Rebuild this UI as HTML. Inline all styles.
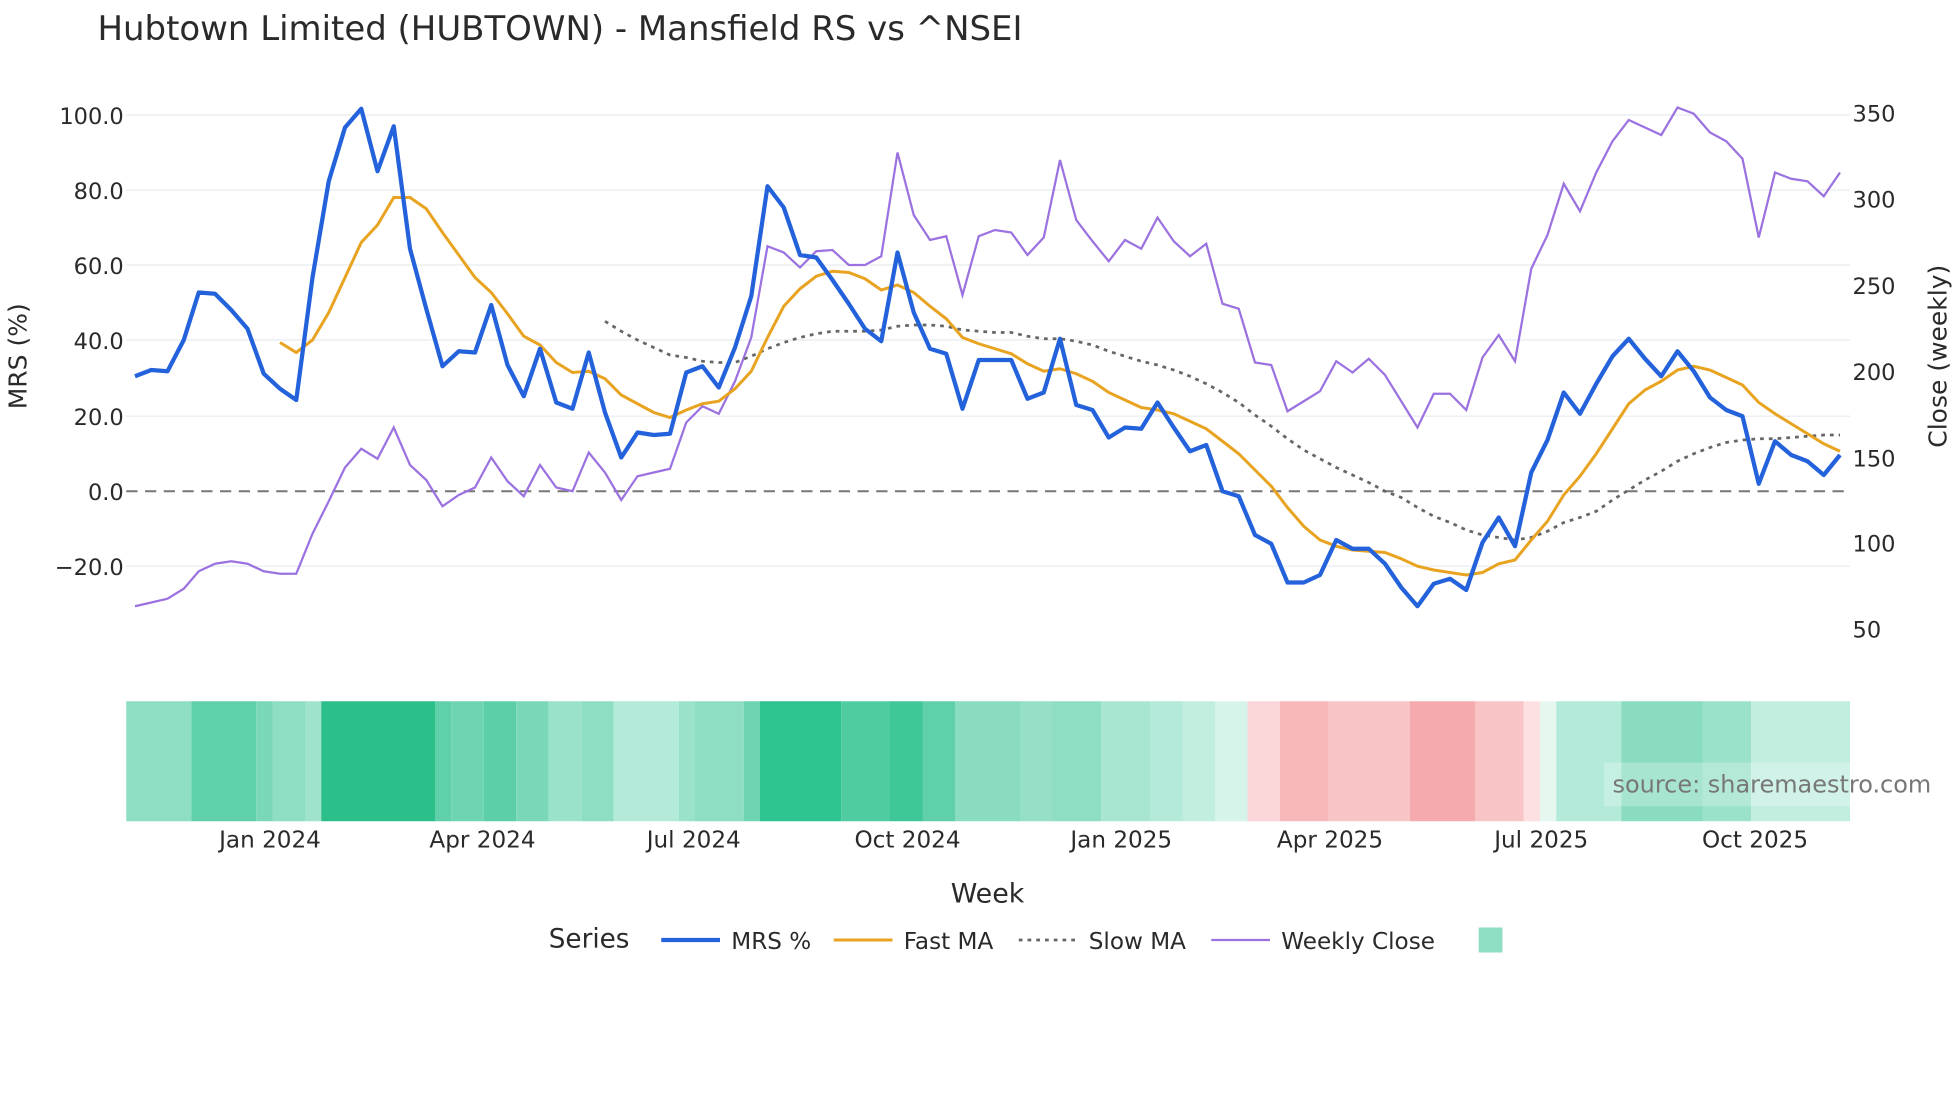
<!DOCTYPE html>
<html><head><meta charset="utf-8"><style>
html,body{margin:0;padding:0;background:#fff;width:1960px;height:1102px;overflow:hidden}
svg{display:block}
text{font-family:"DejaVu Sans","Liberation Sans",sans-serif;fill:#2a2a2a}
</style></head><body>
<svg width="1960" height="1102" viewBox="0 0 1568 881.6" xmlns="http://www.w3.org/2000/svg">
<rect width="1568" height="882" fill="#fff"/>
<text x="78" y="32" font-size="27" textLength="740" lengthAdjust="spacingAndGlyphs">Hubtown Limited (HUBTOWN) - Mansfield RS vs ^NSEI</text>
<g stroke="#eceff3" stroke-width="1.2">
<line x1="101" y1="92" x2="1480" y2="92"/><line x1="101" y1="152" x2="1480" y2="152"/>
<line x1="101" y1="212" x2="1480" y2="212"/><line x1="101" y1="272" x2="1480" y2="272"/>
<line x1="101" y1="333" x2="1480" y2="333"/><line x1="101" y1="453" x2="1480" y2="453"/>
</g>
<line x1="101" y1="393" x2="1480" y2="393" stroke="#777" stroke-width="1.6" stroke-dasharray="9,6"/>
<g font-size="18" text-anchor="end">
<text x="99" y="99">100.0</text><text x="99" y="159">80.0</text><text x="99" y="219">60.0</text>
<text x="99" y="279">40.0</text><text x="99" y="340">20.0</text><text x="99" y="400">0.0</text>
<text x="99" y="460">−20.0</text>
</g>
<g font-size="18">
<text x="1482" y="97">350</text><text x="1482" y="166">300</text><text x="1482" y="235">250</text>
<text x="1482" y="304">200</text><text x="1482" y="373">150</text><text x="1482" y="441">100</text>
<text x="1482" y="510">50</text>
</g>
<text transform="translate(21,285) rotate(-90)" font-size="20" text-anchor="middle">MRS (%)</text>
<text transform="translate(1557,285) rotate(-90)" font-size="20" text-anchor="middle">Close (weekly)</text>

<polyline fill="none" stroke="#9b72e0" stroke-width="1.8" points="108,485 121,482 134,479 147,471 159,457 172,451 185,449 198,451 211,457 224,459 237,459 250,427 263,401 276,374 289,359 302,367 315,342 328,372 341,384 354,405 367,396 380,390 393,366 406,385 419,397 432,372 445,390 458,393 471,362 484,378 497,400 510,381 523,378 536,375 549,338 562,325 575,331 588,305 601,270 614,197 627,202 640,214 653,201 666,200 679,212 692,212 705,205 718,122 731,172 744,192 757,189 770,236 783,189 796,184 809,186 822,204 835,190 848,128 861,176 874,193 887,209 900,192 913,199 926,174 939,193 952,205 965,195 978,243 991,247 1004,290 1017,292 1030,329 1043,321 1056,313 1069,289 1082,298 1095,287 1108,300 1121,321 1134,342 1147,315 1160,315 1173,328 1186,286 1199,268 1212,289 1225,215 1238,188 1251,147 1264,169 1277,138 1290,113 1303,96 1316,102 1329,108 1342,86 1355,91 1368,106 1381,113 1394,127 1407,190 1420,138 1433,143 1446,145 1459,157 1472,138"/>
<polyline fill="none" stroke="#666" stroke-width="2.2" stroke-dasharray="3,4" points="484,257 497,265 510,272 523,278 536,284 549,286 562,289 575,290 588,290 601,285 614,279 627,274 640,270 653,267 666,265 679,265 692,265 705,264 718,261 731,260 744,260 757,261 770,264 783,265 796,266 809,266 822,269 835,271 848,271 861,273 874,276 887,281 900,285 913,289 926,292 939,296 952,301 965,307 978,314 991,322 1004,332 1017,341 1030,351 1043,360 1056,367 1069,374 1082,380 1095,386 1108,393 1121,398 1134,406 1147,413 1160,418 1173,424 1186,428 1199,430 1212,432 1225,430 1238,425 1251,418 1264,414 1277,409 1290,400 1303,392 1316,384 1329,377 1342,369 1355,363 1368,358 1381,354 1394,352 1407,351 1420,351 1433,350 1446,349 1459,348 1472,348"/>
<polyline fill="none" stroke="#e8a321" stroke-width="2.4" points="224,274 237,282 250,272 263,250 276,222 289,194 302,180 315,158 328,158 341,167 354,186 367,204 380,222 393,234 406,251 419,269 432,276 445,290 458,298 471,297 484,303 497,316 510,323 523,330 536,334 549,328 562,323 575,321 588,311 601,297 614,270 627,245 640,231 653,221 666,217 679,218 692,223 705,232 718,228 731,234 744,245 757,255 770,270 783,275 796,279 809,283 822,291 835,297 848,295 861,299 874,305 887,314 900,320 913,326 926,328 939,331 952,337 965,343 978,353 991,363 1004,376 1017,389 1030,406 1043,421 1056,432 1069,437 1082,440 1095,441 1108,442 1121,447 1134,453 1147,456 1160,458 1173,460 1186,458 1199,451 1212,448 1225,432 1238,417 1251,396 1264,381 1277,363 1290,343 1303,323 1316,312 1329,305 1342,296 1355,293 1368,296 1381,302 1394,308 1407,322 1420,331 1433,339 1446,347 1459,355 1472,361"/>
<polyline fill="none" stroke="#2462dc" stroke-width="3.4" stroke-linejoin="round" points="108,301 121,296 134,297 147,272 159,234 172,235 185,248 198,263 211,299 224,311 237,320 250,222 263,145 276,102 289,87 302,137 315,101 328,199 341,247 354,293 367,281 380,282 393,244 406,292 419,317 432,279 445,322 458,327 471,282 484,330 497,366 510,346 523,348 536,347 549,298 562,293 575,310 588,278 601,237 614,149 627,166 640,204 653,206 666,224 679,243 692,263 705,273 718,202 731,250 744,279 757,283 770,327 783,288 796,288 809,288 822,319 835,314 848,271 861,324 874,328 887,350 900,342 913,343 926,322 939,342 952,361 965,356 978,393 991,397 1004,428 1017,435 1030,466 1043,466 1056,460 1069,432 1082,439 1095,439 1108,451 1121,470 1134,485 1147,467 1160,463 1173,472 1186,434 1199,414 1212,437 1225,378 1238,352 1251,314 1264,331 1277,307 1290,285 1303,271 1316,287 1329,301 1342,281 1355,297 1368,318 1381,328 1394,333 1407,387 1420,353 1433,364 1446,369 1459,380 1472,364"/>

<g>
<rect x="101" y="561" width="52" height="96" fill="#8edec4"/>
<rect x="153" y="561" width="52" height="96" fill="#5fd0aa"/>
<rect x="205" y="561" width="13" height="96" fill="#7ad8b8"/>
<rect x="218" y="561" width="26" height="96" fill="#8edec4"/>
<rect x="244" y="561" width="13" height="96" fill="#a0e3cc"/>
<rect x="257" y="561" width="91" height="96" fill="#2bbf8a"/>
<rect x="348" y="561" width="13" height="96" fill="#5fd0aa"/>
<rect x="361" y="561" width="26" height="96" fill="#6fd4b1"/>
<rect x="387" y="561" width="26" height="96" fill="#5ccfa8"/>
<rect x="413" y="561" width="26" height="96" fill="#7ad8b8"/>
<rect x="439" y="561" width="26" height="96" fill="#9be2ca"/>
<rect x="465" y="561" width="26" height="96" fill="#8edec4"/>
<rect x="491" y="561" width="52" height="96" fill="#b3eada"/>
<rect x="543" y="561" width="13" height="96" fill="#9be2ca"/>
<rect x="556" y="561" width="39" height="96" fill="#8edec4"/>
<rect x="595" y="561" width="13" height="96" fill="#6fd4b1"/>
<rect x="608" y="561" width="65" height="96" fill="#2ec48f"/>
<rect x="673" y="561" width="39" height="96" fill="#50cca1"/>
<rect x="712" y="561" width="26" height="96" fill="#3fc798"/>
<rect x="738" y="561" width="26" height="96" fill="#5fd0aa"/>
<rect x="764" y="561" width="52" height="96" fill="#8adcc1"/>
<rect x="816" y="561" width="26" height="96" fill="#95e0c7"/>
<rect x="842" y="561" width="39" height="96" fill="#8edec4"/>
<rect x="881" y="561" width="39" height="96" fill="#a8e6d2"/>
<rect x="920" y="561" width="26" height="96" fill="#b3eada"/>
<rect x="946" y="561" width="26" height="96" fill="#c2eee0"/>
<rect x="972" y="561" width="26" height="96" fill="#d7f4ea"/>
<rect x="998" y="561" width="26" height="96" fill="#fbd6d8"/>
<rect x="1024" y="561" width="39" height="96" fill="#f8b8bb"/>
<rect x="1063" y="561" width="65" height="96" fill="#f8c4c6"/>
<rect x="1128" y="561" width="52" height="96" fill="#f5abae"/>
<rect x="1180" y="561" width="39" height="96" fill="#f8c4c6"/>
<rect x="1219" y="561" width="13" height="96" fill="#fde0e1"/>
<rect x="1232" y="561" width="13" height="96" fill="#e6f7f0"/>
<rect x="1245" y="561" width="52" height="96" fill="#b3eada"/>
<rect x="1297" y="561" width="65" height="96" fill="#8adcc1"/>
<rect x="1362" y="561" width="39" height="96" fill="#9be2ca"/>
<rect x="1401" y="561" width="79" height="96" fill="#c2eee0"/>
</g>
<rect x="1283" y="610" width="197" height="35" fill="#fff" opacity="0.25"/>
<text x="1290" y="634" font-size="19" textLength="255" lengthAdjust="spacingAndGlyphs" style="fill:#777">source: sharemaestro.com</text>

<g font-size="18.5" text-anchor="middle">
<text x="216" y="678">Jan 2024</text><text x="386" y="678">Apr 2024</text>
<text x="555" y="678">Jul 2024</text><text x="726" y="678">Oct 2024</text>
<text x="897" y="678">Jan 2025</text><text x="1064" y="678">Apr 2025</text>
<text x="1233" y="678">Jul 2025</text><text x="1404" y="678">Oct 2025</text>
</g>
<text x="790" y="722" font-size="21.5" text-anchor="middle">Week</text>

<text x="439" y="758" font-size="21">Series</text>
<line x1="529" y1="752" x2="576" y2="752" stroke="#2462dc" stroke-width="3.4"/>
<text x="585" y="759" font-size="18.5">MRS %</text>
<line x1="667" y1="752" x2="714" y2="752" stroke="#e8a321" stroke-width="2.4"/>
<text x="723" y="759" font-size="18.5">Fast MA</text>
<line x1="815" y1="752" x2="862" y2="752" stroke="#666" stroke-width="2.2" stroke-dasharray="3,4"/>
<text x="871" y="759" font-size="18.5">Slow MA</text>
<line x1="969" y1="752" x2="1016" y2="752" stroke="#9b72e0" stroke-width="1.8"/>
<text x="1025" y="759" font-size="18.5">Weekly Close</text>
<rect x="1183" y="742" width="19" height="20" fill="#8edec4"/>
</svg>
</body></html>
